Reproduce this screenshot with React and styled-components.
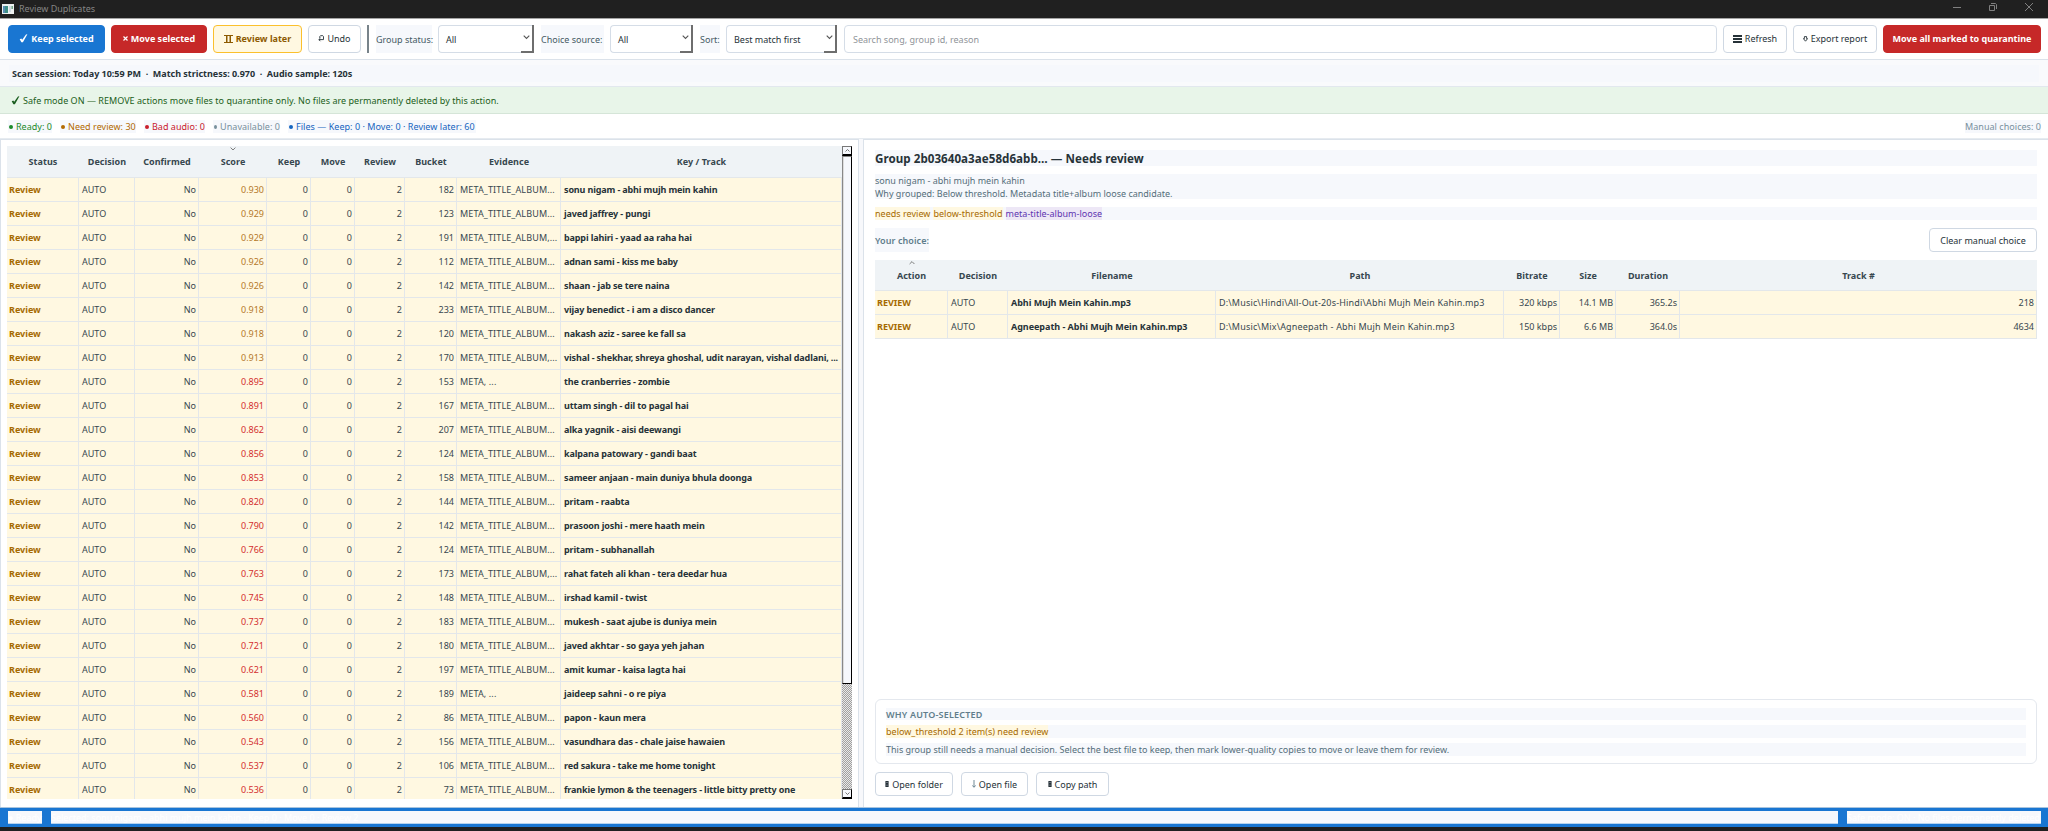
import React from "react";
import styled, { createGlobalStyle, css } from "styled-components";

const Global = createGlobalStyle`
  * { box-sizing: border-box; }
  body { margin: 0; background: #fff; }
`;

const App = styled.div`
  width: 2048px;
  height: 831px;
  display: flex;
  flex-direction: column;
  overflow: hidden;
  background: #fff;
  color: #37474f;
  font: 9px/13px "Noto Sans", "Open Sans", sans-serif;
  white-space: nowrap;
`;

const TitleBar = styled.header`
  height: 19px;
  flex: none;
  display: flex;
  align-items: center;
  padding: 0 15px 1px 2px;
  background: #202020;
  border-bottom: 1px solid #a5a5a5;
  color: #858585;
`;
const AppName = styled.span`
  margin-left: 5px;
  flex: 1;
`;
const WindowButtons = styled.div`
  display: flex;
  gap: 28px;
  margin-top: -3px;
`;

const Toolbar = styled.div`
  height: 41px;
  flex: none;
  display: flex;
  align-items: center;
  padding: 0 7px 1px 8px;
  border-bottom: 1px solid #dbe2ea;
`;

const variants = {
  plain: css`background: #fff; border-color: #cfd8e3; color: #263238;`,
  blue: css`background: #1976d2; border-color: #1976d2; color: #fff; font-weight: 700;`,
  red: css`background: #c62828; border-color: #c62828; color: #fff; font-weight: 700;`,
  amber: css`background: #fff8e1; border-color: #fbc02d; color: #8d5a00; font-weight: 700;`,
};
const Button = styled.button`
  width: ${(p) => p.$w}px;
  height: ${(p) => p.$h || 28}px;
  margin: 0 ${(p) => (p.$last ? 0 : 6)}px 0 0;
  padding: 0;
  flex: none;
  display: flex;
  align-items: center;
  justify-content: center;
  gap: 3px;
  border: 1px solid;
  border-radius: 4px;
  font: inherit;
  ${(p) => variants[p.$kind || "plain"]}
`;
const Divider = styled.div`
  width: 2px;
  height: 28px;
  margin: 0 7px 0 0;
  background: #78838a;
`;
const FieldLabel = styled.label`
  width: ${(p) => p.$w}px;
  height: 28px;
  line-height: 29px;
  margin-right: 6px;
  background: #f6f8fc;
  color: #455a64;
`;
const Select = styled.div`
  width: ${(p) => p.$w}px;
  height: 28px;
  margin-right: 7px;
  display: flex;
  border: 1px solid #d5dde7;
  border-radius: 4px 0 0 4px;
  border-right: 0;
  color: #263238;
`;
const SelectValue = styled.span`
  flex: 1;
  padding-left: 7px;
  line-height: 27px;
`;
const SelectArrow = styled.div`
  width: 13px;
  height: 28px;
  margin-top: -1px;
  display: flex;
  align-items: center;
  justify-content: center;
  border-right: 2px solid #6e6e6e;
  border-bottom: 2px solid #6e6e6e;
`;
const Search = styled.div`
  flex: 1;
  height: 28px;
  margin-right: 6px;
  padding-left: 8px;
  line-height: 27px;
  border: 1px solid #d5dde7;
  border-radius: 4px;
  color: #8f9499;
`;

const SessionBar = styled.div`
  height: 27px;
  flex: none;
  padding: 5px 9px 4px;
  background: #f9fafc;
  border-bottom: 1px solid #e2e8ee;
`;
const SessionText = styled.div`
  height: 17px;
  line-height: 18px;
  padding-left: 3px;
  background: #f6f8fc;
  color: #263238;
  font-weight: 700;
  letter-spacing: -0.015px;
  white-space: pre;
`;
const SafeBar = styled.div`
  height: 27px;
  flex: none;
  display: flex;
  align-items: center;
  padding: 1px 11px 0;
  gap: 3px;
  background: #e8f5e9;
  border-bottom: 1px solid #d5e5d8;
  color: #1b5e20;
  letter-spacing: 0.03px;
`;
const CountBar = styled.div`
  height: 25px;
  flex: none;
  display: flex;
  align-items: center;
  padding: 1px 7px 0 8px;
  border-bottom: 1px solid #e6ebf0;
`;
const Count = styled.span`
  width: ${(p) => p.$w}px;
  margin-right: ${(p) => (p.$end ? 0 : 8)}px;
  margin-left: ${(p) => (p.$end ? "auto" : 0)};
  display: flex;
  align-items: center;
  gap: 3px;
  background: #f6f8fc;
  color: ${(p) => p.$c};
  letter-spacing: 0.04px;
`;
const Dot = styled.i`
  width: 4px;
  height: 4px;
  margin: 1px 0 0 1px;
  border-radius: 50%;
  background: currentColor;
`;

const Main = styled.main`
  height: 668px;
  flex: none;
  display: flex;
  background: #f7f8fb;
`;
const LeftPanel = styled.section`
  width: 859px;
  display: flex;
  padding: 6px 5px 7px 6px;
  background: #fff;
  border: 1px solid #dbe2ea;
  border-bottom: 0;
`;
const RightPanel = styled.section`
  flex: 1;
  margin-left: 4px;
  display: flex;
  flex-direction: column;
  padding: 10px 11px 11px;
  background: #fff;
  border: 1px solid #dbe2ea;
  border-right: 0;
  border-bottom: 0;
`;

const Table = styled.div`
  width: ${(p) => p.$w}px;
  height: ${(p) => (p.$h ? p.$h + "px" : "auto")};
  flex: none;
  overflow: hidden;
`;
const Row = styled.div`
  display: grid;
  grid-template-columns: ${(p) => p.$cols};
  height: ${(p) => p.$head || 24}px;
  background: ${(p) => (p.$head ? "#eff3f6" : "#fff8e1")};
  border-bottom: 1px solid #e3e7ea;
`;
const HeadCell = styled.div`
  display: flex;
  flex-direction: column;
  align-items: center;
  font-weight: 700;
  line-height: 13px;
  letter-spacing: 0.05px;
`;
const SortMark = styled.div`
  height: 9px;
  display: flex;
  padding-top: 1px;
`;
const Cell = styled.div`
  padding: 0 2px 0 ${(p) => (p.$first ? 2 : 3)}px;
  line-height: 24px;
  overflow: hidden;
  border-right: 1px solid #e3e7ea;
  text-align: ${(p) => (p.$right ? "right" : "left")};
  font-weight: ${(p) => (p.$bold ? 700 : 400)};
  color: ${(p) => p.$c || "#37474f"};
  letter-spacing: ${(p) => p.$ls || 0}px;
`;

const Scroll = styled.div`
  width: 10px;
  height: 653px;
  display: flex;
  flex-direction: column;
  background: repeating-conic-gradient(#a0a0a0 0 25%, #e8e8e8 0 50%) 0 0 / 2px 2px;
`;
const ScrollButton = styled.div`
  height: 10px;
  display: flex;
  align-items: center;
  justify-content: center;
  background: #f6f8fc;
  border: 1px solid #777;
  border-right-color: #000;
  border-bottom: 2px solid #000;
`;
const Thumb = styled.div`
  height: 528px;
  margin-bottom: auto;
  background: #f6f8fc;
  border: 1px solid #888;
  border-right: 1px solid #000;
  border-bottom: 1px solid #000;
  box-shadow: inset 1px 0 #ddd;
`;

const GroupTitle = styled.h1`
  height: 16px;
  margin: 0 0 8px;
  background: #f6f8fc;
  color: #263238;
  font-size: 11.6px;
  line-height: 17px;
  letter-spacing: 0.04px;
`;
const Description = styled.div`
  height: 25px;
  margin-bottom: 8px;
  background: #f6f8fc;
  color: #546e7a;
`;
const Tags = styled.div`
  display: flex;
  gap: 3px;
  height: 13px;
  background: #f6f8fc;
`;
const Tag = styled.span`
  background: ${(p) => (p.$violet ? "#ede7f6" : "#fff8e1")};
  color: ${(p) => (p.$violet ? "#5e35b1" : "#a66a00")};
  letter-spacing: 0.02px;
`;
const ChoiceRow = styled.div`
  display: flex;
  justify-content: space-between;
  margin: 8px 0;
`;
const ChoiceLabel = styled.div`
  width: 54px;
  height: 24px;
  line-height: 25px;
  background: #f6f8fc;
  color: #607d8b;
  font-weight: 600;
  letter-spacing: 0.08px;
`;
const ReasonCard = styled.div`
  height: 65px;
  margin-top: auto;
  padding: 8px 10px;
  border: 1px solid #e4e8ee;
  border-radius: 6px;
  display: flex;
  flex-direction: column;
  gap: 5px;
`;
const ReasonLine = styled.div`
  height: ${(p) => p.$h || 13}px;
  line-height: 13px;
  background: #f6f8fc;
  color: ${(p) => p.$c || "#546e7a"};
  font-weight: ${(p) => (p.$bold ? 600 : 400)};
  letter-spacing: ${(p) => p.$ls || 0}px;
`;
const FileActions = styled.div`
  display: flex;
  gap: 2px;
  margin-top: 8px;
`;

const StatusBar = styled.footer`
  height: 20px;
  flex: none;
  display: flex;
  gap: 9px;
  padding: 3px 7px 4px 8px;
  background: #1976d2;
  border-top: 1px solid #a9c4dd;
`;
const StatusText = styled.div`
  width: ${(p) => (p.$w ? p.$w + "px" : "auto")};
  flex: ${(p) => (p.$w ? "none" : 1)};
  height: 13px;
  background: #f6f8fc;
  border-bottom: 1px solid #b6d2ee;
  color: #fff;
  line-height: 14px;
`;
const Bottom = styled.div`
  flex: 1;
  background: #202020;
`;

const Chevron = ({ up, w = 7, c = "#555" }) => (
  <svg width={w} height={w * 0.6} viewBox="0 0 10 6" fill="none" stroke={c} strokeWidth="1.6">
    <path d={up ? "M1 5L5 1L9 5" : "M1 1L5 5L9 1"} />
  </svg>
);
const Check = () => (
  <svg width="9" height="9" viewBox="0 0 9 9" fill="currentColor">
    <path d="M0.7 5.3L2.3 4.5L3.2 5.8L7 0.6L8.4 0.3L3.9 8.2H2.4Z" />
  </svg>
);
const Pause = () => (
  <svg width="9" height="8" viewBox="0 0 9 8" fill="currentColor">
    <path d="M0 0H9V1H0ZM0 7H9V8H0ZM2 1H3.5V7H2ZM5.5 1H7V7H5.5Z" />
  </svg>
);
const Cross = () => (
  <svg width="5" height="5" viewBox="0 0 5 5" stroke="currentColor" strokeWidth="1.2">
    <path d="M0.5 0.5L4.5 4.5M4.5 0.5L0.5 4.5" />
  </svg>
);
const UndoIcon = () => (
  <svg width="6" height="7" viewBox="0 0 6 7" fill="none" stroke="currentColor" strokeWidth="0.9">
    <path d="M1.8 3V1.5L2.5 0.7H4.8L5.5 1.5V4.6H1M2.4 3.2L0.8 4.6L2.4 6.2" />
  </svg>
);
const Bars = () => (
  <svg width="9" height="8" viewBox="0 0 9 8" fill="currentColor" shapeRendering="crispEdges">
    <path d="M0 0H9V2H0ZM0 3H9V5H0ZM0 6H9V8H0Z" />
  </svg>
);
const ExportIcon = () => (
  <svg width="5" height="6" viewBox="0 0 5 6" fill="none" stroke="currentColor" strokeWidth="0.9">
    <path d="M1.4 0.6H3.6V2.6H4.6L2.5 5.2L0.4 2.6H1.4Z" />
  </svg>
);
const Arrow = () => (
  <svg width="4" height="8" viewBox="0 0 4 8" fill="none" stroke="#607d8b" strokeWidth="0.9">
    <path d="M2 0V7M0.3 5.4L2 7.3L3.7 5.4" />
  </svg>
);
const Block = () => (
  <svg width="4" height="6" viewBox="0 0 4 6">
    <path d="M0.4 0H3.6V6H0.4Z" fill="#263238" />
    <path d="M1.4 1.5H2.6M1.4 4.2H2.6" stroke="#aab" strokeWidth="0.8" />
  </svg>
);
const AppIcon = () => (
  <svg width="12" height="10" viewBox="0 0 12 10">
    <rect width="12" height="10" fill="#eef2f2" />
    <rect x="1" y="2" width="5" height="7" fill="#3f8f86" />
    <rect x="1" y="2" width="2" height="7" fill="#5b8fb5" />
    <rect x="7" y="2" width="2" height="6" fill="#cfdbe2" />
    <rect x="9.4" y="2" width="1.6" height="3" fill="#79a98c" />
  </svg>
);

const groupCols = "72px 56px 64px 68px 44px 44px 50px 52px 104px 281px";
const groupHeads = ["Status", "Decision", "Confirmed", "Score", "Keep", "Move", "Review", "Bucket", "Evidence", "Key / Track"];
const E = "META_TITLE_ALBUM...";
const F = "META_TITLE_ALBUM,...";
const groups = [
  ["0.930", 182, E, "sonu nigam - abhi mujh mein kahin"],
  ["0.929", 123, E, "javed jaffrey - pungi"],
  ["0.929", 191, F, "bappi lahiri - yaad aa raha hai"],
  ["0.926", 112, E, "adnan sami - kiss me baby"],
  ["0.926", 142, E, "shaan - jab se tere naina"],
  ["0.918", 233, E, "vijay benedict - i am a disco dancer"],
  ["0.918", 120, E, "nakash aziz - saree ke fall sa"],
  ["0.913", 170, F, "vishal - shekhar, shreya ghoshal, udit narayan, vishal dadlani, ..."],
  ["0.895", 153, "META, ...", "the cranberries - zombie"],
  ["0.891", 167, E, "uttam singh - dil to pagal hai"],
  ["0.862", 207, E, "alka yagnik - aisi deewangi"],
  ["0.856", 124, E, "kalpana patowary - gandi baat"],
  ["0.853", 158, E, "sameer anjaan - main duniya bhula doonga"],
  ["0.820", 144, E, "pritam - raabta"],
  ["0.790", 142, E, "prasoon joshi - mere haath mein"],
  ["0.766", 124, E, "pritam - subhanallah"],
  ["0.763", 173, F, "rahat fateh ali khan - tera deedar hua"],
  ["0.745", 148, E, "irshad kamil - twist"],
  ["0.737", 183, E, "mukesh - saat ajube is duniya mein"],
  ["0.721", 180, E, "javed akhtar - so gaya yeh jahan"],
  ["0.621", 197, E, "amit kumar - kaisa lagta hai"],
  ["0.581", 189, "META, ...", "jaideep sahni - o re piya"],
  ["0.560", 86, E, "papon - kaun mera"],
  ["0.543", 156, E, "vasundhara das - chale jaise hawaien"],
  ["0.537", 106, E, "red sakura - take me home tonight"],
  ["0.536", 73, E, "frankie lymon & the teenagers - little bitty pretty one"],
];
const fileCols = "73px 60px 208px 288px 56px 56px 64px 357px";
const fileHeads = ["Action", "Decision", "Filename", "Path", "Bitrate", "Size", "Duration", "Track #"];
const files = [
  ["Abhi Mujh Mein Kahin.mp3", "D:\\Music\\Hindi\\All-Out-20s-Hindi\\Abhi Mujh Mein Kahin.mp3", "320 kbps", "14.1 MB", "365.2s", "218"],
  ["Agneepath - Abhi Mujh Mein Kahin.mp3", "D:\\Music\\Mix\\Agneepath - Abhi Mujh Mein Kahin.mp3", "150 kbps", "6.6 MB", "364.0s", "4634"],
];

const HeadRow = ({ cols, heads, sorted, up, height }) => (
  <Row $head={height} $cols={cols}>
    {heads.map((h) => (
      <HeadCell key={h}>
        <SortMark>{h === sorted && <Chevron up={up} w={6} c="#777" />}</SortMark>
        {h}
      </HeadCell>
    ))}
  </Row>
);

export default function ReviewDuplicates() {
  return (
    <App>
      <Global />
      <TitleBar>
        <AppIcon />
        <AppName>Review Duplicates</AppName>
        <WindowButtons>
          <svg width="8" height="8" viewBox="0 0 8 8" stroke="#808080"><path d="M0 4.5H8" /></svg>
          <svg width="8" height="8" viewBox="0 0 8 8" stroke="#808080" fill="none"><path d="M0.5 2.5H5.5V7.5H0.5ZM2 0.5H6.5L7.5 1.5V6" /></svg>
          <svg width="8" height="8" viewBox="0 0 8 8" stroke="#808080"><path d="M0 0L8 8M8 0L0 8" /></svg>
        </WindowButtons>
      </TitleBar>
      <Toolbar>
        <Button $kind="blue" $w={97}><Check />Keep selected</Button>
        <Button $kind="red" $w={96}><Cross />Move selected</Button>
        <Button $kind="amber" $w={89}><Pause />Review later</Button>
        <Button $w={53}><UndoIcon />Undo</Button>
        <Divider />
        <FieldLabel $w={56}>Group status:</FieldLabel>
        <Select $w={96}><SelectValue>All</SelectValue><SelectArrow><Chevron /></SelectArrow></Select>
        <FieldLabel $w={63}>Choice source:</FieldLabel>
        <Select $w={83}><SelectValue>All</SelectValue><SelectArrow><Chevron /></SelectArrow></Select>
        <FieldLabel $w={20}>Sort:</FieldLabel>
        <Select $w={111}><SelectValue>Best match first</SelectValue><SelectArrow><Chevron /></SelectArrow></Select>
        <Search>Search song, group id, reason</Search>
        <Button $w={64}><Bars />Refresh</Button>
        <Button $w={84}><ExportIcon />Export report</Button>
        <Button $kind="red" $w={158} $last>Move all marked to quarantine</Button>
      </Toolbar>
      <SessionBar>
        <SessionText>{"Scan session: Today 10:59 PM  ·  Match strictness: 0.970  ·  Audio sample: 120s"}</SessionText>
      </SessionBar>
      <SafeBar>
        <Check />
        Safe mode ON — REMOVE actions move files to quarantine only. No files are permanently deleted by this action.
      </SafeBar>
      <CountBar>
        <Count $c="#1b8a2b" $w={44}><Dot />Ready: 0</Count>
        <Count $c="#b26a00" $w={76}><Dot />Need review: 30</Count>
        <Count $c="#c9202c" $w={61}><Dot />Bad audio: 0</Count>
        <Count $c="#78909c" $w={67}><Dot />Unavailable: 0</Count>
        <Count $c="#1565c0" $w={188}><Dot />Files — Keep: 0 · Move: 0 · Review later: 60</Count>
        <Count $c="#78909c" $w={76} $end>Manual choices: 0</Count>
      </CountBar>
      <Main>
        <LeftPanel>
          <Table $w={835} $h={653}>
            <HeadRow cols={groupCols} heads={groupHeads} sorted="Score" height={32} />
            {groups.map(([score, bucket, evidence, track]) => (
              <Row key={track} $cols={groupCols}>
                <Cell $first $bold $c="#a66a00">Review</Cell>
                <Cell>AUTO</Cell>
                <Cell $right>No</Cell>
                <Cell $right $c={score >= "0.9" ? "#b5782a" : "#d32f2f"}>{score}</Cell>
                <Cell $right>0</Cell>
                <Cell $right>0</Cell>
                <Cell $right>2</Cell>
                <Cell $right>{bucket}</Cell>
                <Cell $ls={0.13}>{evidence}</Cell>
                <Cell $bold $ls={-0.14} $c="#263238">{track}</Cell>
              </Row>
            ))}
          </Table>
          <Scroll>
            <ScrollButton><Chevron up w={5} /></ScrollButton>
            <Thumb />
            <ScrollButton><Chevron w={5} /></ScrollButton>
          </Scroll>
        </LeftPanel>
        <RightPanel>
          <GroupTitle>Group 2b03640a3ae58d6abb… — Needs review</GroupTitle>
          <Description>
            sonu nigam - abhi mujh mein kahin<br />
            Why grouped: Below threshold. Metadata title+album loose candidate.
          </Description>
          <Tags>
            <Tag>needs review</Tag>
            <Tag>below-threshold</Tag>
            <Tag $violet>meta-title-album-loose</Tag>
          </Tags>
          <ChoiceRow>
            <ChoiceLabel>Your choice:</ChoiceLabel>
            <Button $w={108} $h={24} $last>Clear manual choice</Button>
          </ChoiceRow>
          <Table $w={1162}>
            <HeadRow cols={fileCols} heads={fileHeads} sorted="Action" up height={31} />
            {files.map(([name, path, rate, size, time, track]) => (
              <Row key={name} $cols={fileCols}>
                <Cell $first $bold $c="#a66a00">REVIEW</Cell>
                <Cell>AUTO</Cell>
                <Cell $bold $ls={-0.03} $c="#263238">{name}</Cell>
                <Cell $ls={0.17}>{path}</Cell>
                <Cell $right>{rate}</Cell>
                <Cell $right>{size}</Cell>
                <Cell $right>{time}</Cell>
                <Cell $right>{track}</Cell>
              </Row>
            ))}
          </Table>
          <ReasonCard>
            <ReasonLine $h={12} $bold $c="#607d8b" $ls={0.2}>WHY AUTO-SELECTED</ReasonLine>
            <ReasonLine><Tag>below_threshold 2 item(s) need review</Tag></ReasonLine>
            <ReasonLine>This group still needs a manual decision. Select the best file to keep, then mark lower-quality copies to move or leave them for review.</ReasonLine>
          </ReasonCard>
          <FileActions>
            <Button $w={78} $h={24}><Block />Open folder</Button>
            <Button $w={67} $h={24}><Arrow />Open file</Button>
            <Button $w={73} $h={24}><Block />Copy path</Button>
          </FileActions>
        </RightPanel>
      </Main>
      <StatusBar>
        <StatusText $w={34}>● Ready</StatusText>
        <StatusText>Selected: sonu nigam - abhi mujh mein kahin · Keep 0 · Move 0 · Review 2</StatusText>
        <StatusText $w={194}>Safe mode: ON · No files permanently deleted</StatusText>
      </StatusBar>
      <Bottom />
    </App>
  );
}
